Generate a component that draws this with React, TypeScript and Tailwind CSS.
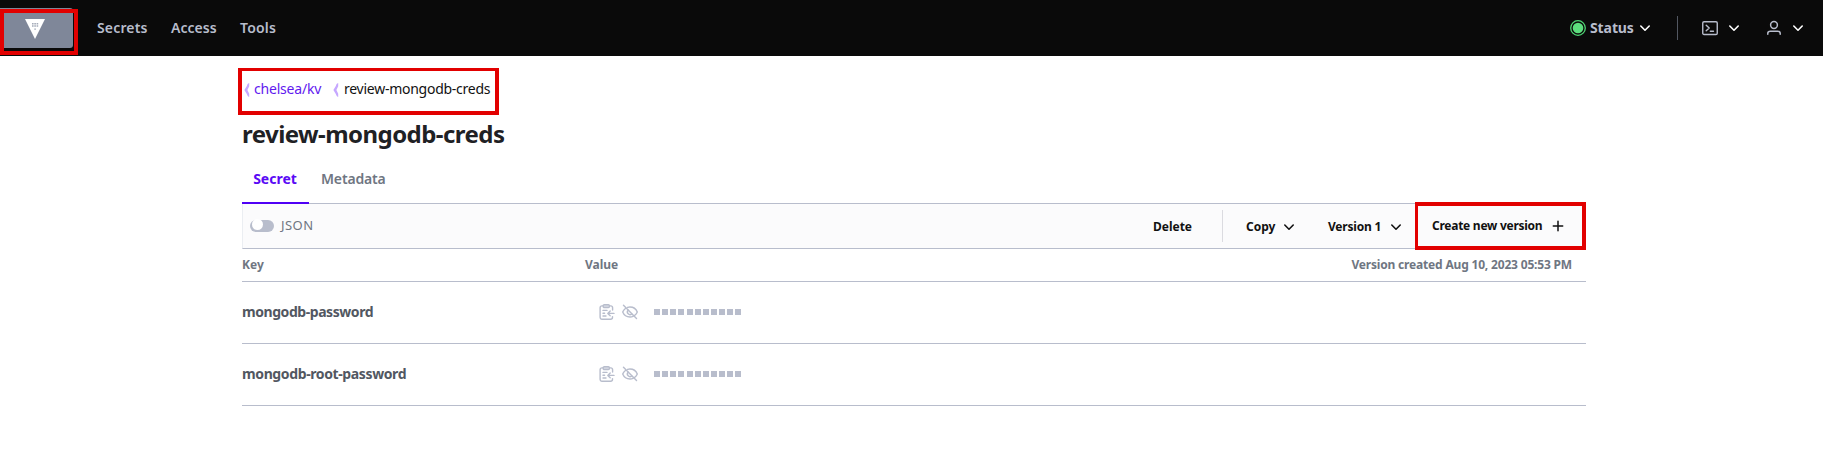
import React from "react";

function Chevron({ className = "" }: { className?: string }) {
  return (
    <svg viewBox="0 0 16 16" fill="none" stroke="currentColor" strokeWidth="1.6" strokeLinecap="round" strokeLinejoin="round" className={`size-4 shrink-0 ${className}`}>
      <path d="M3.8 6l4.2 4.2L12.2 6" />
    </svg>
  );
}

function VaultLogo() {
  return (
    <svg viewBox="0 0 20 20" className="ml-[25px] size-5">
      <path d="M0 0h20L10 20z" fill="#fff" />
      <g fill="#a3aab8">
        <path d="M7 4h1.6v1.4H7zM9.3 4h1.6v1.4H9.3zM11.6 4h1.6v1.4h-1.6zM7 6.3h1.6v1.4H7zM9.3 6.3h1.6v1.4H9.3zM11.6 6.3h1.6v1.4h-1.6zM9.3 9.4h1.6v1.4H9.3z" />
      </g>
    </svg>
  );
}

function Terminal() {
  return (
    <svg viewBox="0 0 16 16" fill="none" stroke="#b8bdcc" strokeWidth="1.4" strokeLinecap="round" strokeLinejoin="round" className="size-4">
      <rect x="0.75" y="1.7" width="14.5" height="12.8" rx="1.3" />
      <path d="M4.2 5.2l3 2.8-3 2.8M8.3 11.2h3.2" />
    </svg>
  );
}

function User() {
  return (
    <svg viewBox="0 0 16 16" fill="none" stroke="#b8bdcc" strokeWidth="1.5" strokeLinecap="round" strokeLinejoin="round" className="size-4">
      <circle cx="8" cy="5" r="3.4" />
      <path d="M1.8 14.2v-.9c0-1.2 1.2-2.1 2.6-2.1h7.2c1.4 0 2.6.9 2.6 2.1v.9" />
    </svg>
  );
}

function CopyIcon() {
  return (
    <svg viewBox="0 0 16 16" fill="none" stroke="#b8bdcc" strokeWidth="1.4" strokeLinecap="round" strokeLinejoin="round" className="size-4">
      <path d="M4.2 1.9H3A1.9 1.9 0 0 0 1.1 3.8v9.5a1.9 1.9 0 0 0 1.9 1.9h8.6a1.9 1.9 0 0 0 1.9-1.9v-.7M10.4 1.9h1.3a1.9 1.9 0 0 1 1.9 1.9v2.2" />
      <rect x="4.2" y="0.7" width="6.2" height="2.8" rx="1" fill="#dbdee7" />
      <path d="M4 6.4h4M4 9.2h1.6M4 12h3M15 9.4H9M11.2 7L8.8 9.4l2.4 2.4" />
    </svg>
  );
}

function EyeOff() {
  return (
    <svg viewBox="0 0 16 16" fill="none" stroke="#b8bdcc" strokeWidth="1.4" strokeLinecap="round" strokeLinejoin="round" className="size-4">
      <path d="M1.5 1.2l13 13.4M5.6 3.4A7 7 0 0 1 8 3c4.2 0 6.6 3.3 7.3 5-.4.9-1.2 2.2-2.5 3.3M3.4 4.5C1.9 5.6 1.1 7 .7 8c.7 1.7 3.1 5 7.3 5 1.1 0 2.1-.2 3-.6" />
      <path d="M6.2 6.3a2.5 2.5 0 0 0 3.5 3.6" />
    </svg>
  );
}

function Crumb() {
  return (
    <svg viewBox="0 0 6 14" className="h-[14px] w-[6px] shrink-0">
      <path d="M5.2 0 C3.6 .4 3.4 1.6 2.8 3 L.4 7l2.4 4c.6 1.400.8 2.600 2.400 3V10.800L3.400 7l1.800-3.800z" fill="#c6a8ff" />
    </svg>
  );
}

function SecretRow({ name, tracking }: { name: string; tracking: string }) {
  return (
    <div className="flex h-[62px] items-center border-b border-[#b8bdcc]">
      <div className={`w-[357px] pb-0.5 text-[14px] font-bold text-[#525761] ${tracking}`}>{name}</div>
      <div className="flex items-center pb-[2px]">
        <CopyIcon />
        <div className="ml-[7px]">
          <EyeOff />
        </div>
        <div className="ml-[16px] flex gap-[2.15px]">
          {Array.from({ length: 11 }, (_, i) => (
            <span key={i} className="size-[6px] bg-[#b8bdcc]" />
          ))}
        </div>
      </div>
    </div>
  );
}

export default function App() {
  return (
    <div className="relative h-[468px] w-[1823px] overflow-hidden bg-white font-['Noto_Sans',sans-serif] whitespace-nowrap">
      <header className="flex h-14 items-center bg-[#0a0a0a] text-[14px] font-semibold text-[#b8bdcc]">
        <div className="flex h-10 w-[73px] items-center rounded-r-[3px] bg-[#7f8799] pt-px">
          <VaultLogo />
        </div>
        <nav className="flex pb-[2px] pl-6">
          <a className="w-[74px] tracking-[0.16px]">Secrets</a>
          <a className="w-[69px] tracking-[0.04px]">Access</a>
          <a className="tracking-[0.2px]">Tools</a>
        </nav>
        <div className="ml-auto flex items-center pr-[17px]">
          <svg viewBox="0 0 16 16" className="size-4">
            <circle cx="8" cy="8" r="7.3" fill="none" stroke="#4fd373" strokeWidth="1.3" />
            <circle cx="8" cy="8" r="5.3" fill="#5cdd7d" />
          </svg>
          <span className="ml-1 w-[47px] pb-[2px] font-bold tracking-[-0.1px]">Status</span>
          <Chevron className="text-white" />
          <span className="ml-[24px] h-6 w-px bg-[#525761]" />
          <span className="ml-[24px]"><Terminal /></span>
          <Chevron className="ml-2 text-white" />
          <span className="ml-[24px]"><User /></span>
          <Chevron className="ml-2 text-white" />
        </div>
      </header>

      <main className="ml-[242px] w-[1344px]">
        <div className="flex h-[65px] items-center text-[14px] text-[#111]">
          <div className="ml-[2px] mt-0.5"><Crumb /></div>
          <a className="ml-[4px] w-[79px] tracking-[-0.2px] text-[#6219ef]">chelsea/kv</a>
          <div className="mt-0.5"><Crumb /></div>
          <span className="ml-[5px] tracking-[-0.26px]">review-mongodb-creds</span>
        </div>
        <h1 className="h-[31px] text-[24px] leading-[25px] font-bold tracking-[-0.55px] text-[#1f2124]">review-mongodb-creds</h1>
        <div className="flex h-[52px] border-b border-[#b8bdcc] text-[14px] leading-[53px]">
          <div className="h-[52px] w-[67px] border-b-2 border-[#4f00f5] pr-px text-center font-bold text-[#5a0af5]">Secret</div>
          <div className="ml-3 font-semibold tracking-[-0.16px] text-[#6f7682]">Metadata</div>
        </div>
        <div className="flex h-[45px] items-center border-b border-l border-b-[#b8bdcc] border-l-[#ebeef2] bg-[#fbfbfc] text-[12px] font-bold text-[#111]">
          <div className="mb-px ml-[7px] flex h-3 w-6 items-start rounded-full bg-[#b8bdcc] pl-0.5">
            <span className="-mt-px size-[11px] rounded-full bg-white" />
          </div>
          <span className="ml-[7px] pb-px text-[13px] font-normal tracking-[0.45px] text-[#6f7682]">JSON</span>
          <span className="ml-auto pt-px">Delete</span>
          <span className="ml-[30px] h-8 w-px bg-[#dbdbe0]" />
          <span className="ml-[23px] w-[35px] pt-px">Copy</span>
          <Chevron className="mt-px" />
          <span className="ml-[31px] w-[60px] pt-px tracking-[-0.2px]">Version 1</span>
          <Chevron className="mt-px" />
          <span className="ml-[28px] w-[118px] pb-px tracking-[-0.26px]">Create new version</span>
          <svg viewBox="0 0 16 16" fill="none" stroke="currentColor" strokeWidth="1.5" strokeLinecap="round" className="mr-[20px] mb-px size-4">
            <path d="M8 3.3v9.4M3.3 8h9.4" />
          </svg>
        </div>
        <div className="flex h-[33px] items-center border-b border-[#b8bdcc] pb-px text-[12px] font-bold text-[#6f7682]">
          <span className="w-[343px]">Key</span>
          <span>Value</span>
          <span className="mr-[14px] ml-auto tracking-[-0.18px]">Version created Aug 10, 2023 05:53 PM</span>
        </div>
        <SecretRow name="mongodb-password" tracking="tracking-[-0.44px]" />
        <SecretRow name="mongodb-root-password" tracking="tracking-[-0.38px]" />
      </main>

      <div className="absolute top-[9px] left-0 h-[46px] w-[78px] border-4 border-[#e20000] shadow-[inset_0_-1px_#0a0a0a,inset_-1px_0_#0a0a0a]" />
      <div className="absolute top-[68px] left-[238px] h-[47px] w-[261px] border-4 border-t-[3px] border-[#e20000]" />
      <div className="absolute top-[202px] left-[1415px] h-[48px] w-[171px] border-4 border-l-[3px] border-[#e20000]" />
    </div>
  );
}
